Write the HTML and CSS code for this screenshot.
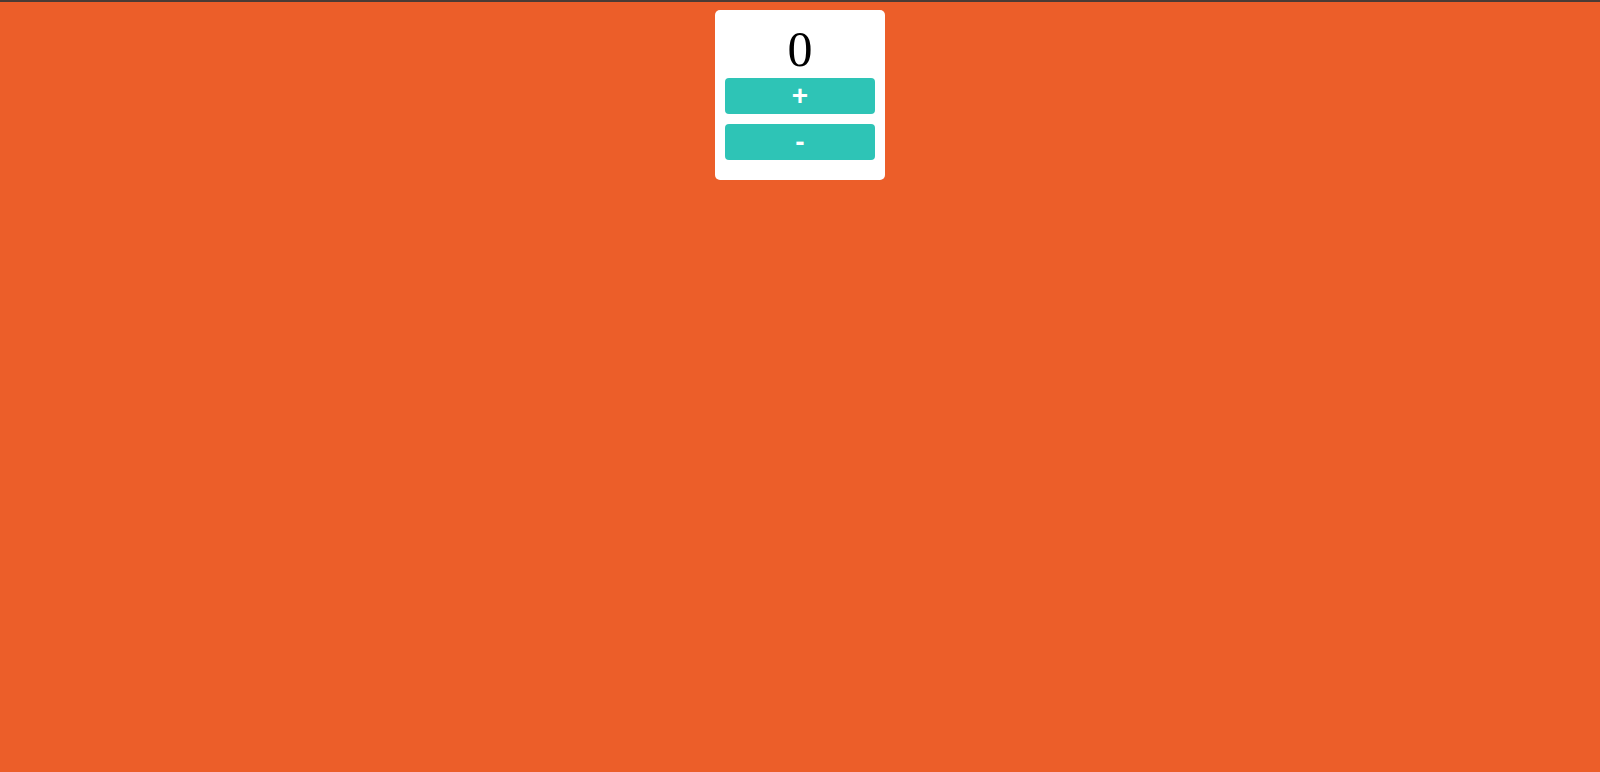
FILE: index.html
```html
<!DOCTYPE html>
<html>
<head>
<meta charset="utf-8">
<link rel="stylesheet" href="styles.css">
</head>
<body>
<div class="topline"></div>
<main class="page">
  <div class="card">
    <div class="count">0</div>
    <button class="btn">+</button>
    <button class="btn">-</button>
  </div>
</main>
</body>
</html>
```
FILE: styles.css
```css
html, body {
  margin: 0;
  padding: 0;
  background: #ec5e29;
  height: 100%;
}
.topline {
  height: 2px;
  background: #4a3b35;
}
.page {
  display: flex;
  justify-content: center;
  padding-top: 8px;
}
.card {
  width: 150px;
  padding: 10px;
  background: #ffffff;
  border-radius: 5px;
  display: flex;
  flex-direction: column;
  align-items: stretch;
}
.count {
  font-family: "Liberation Serif", "Times New Roman", serif;
  font-size: 50px;
  text-align: center;
  color: #000;
  height: 58px;
  line-height: 58px;
}
.btn {
  height: 36px;
  margin: 0 0 10px 0;
  padding: 0;
  border: none;
  border-radius: 4px;
  background: #2ec4b6;
  color: #ffffff;
  font-family: "Liberation Sans", Arial, sans-serif;
  font-size: 28px;
  font-weight: bold;
  line-height: 36px;
  cursor: pointer;
}
```
